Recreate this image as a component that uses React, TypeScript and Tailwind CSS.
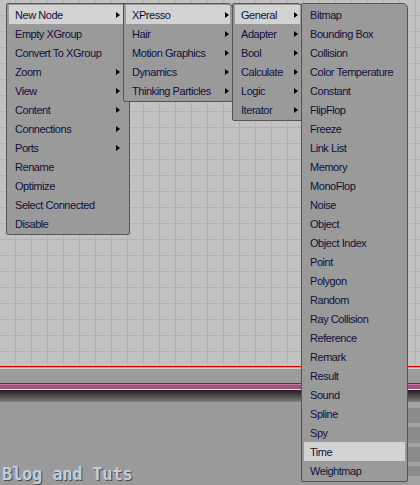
type MenuItem = { label: string; sub?: boolean };

const nodeMenu: MenuItem[] = [
  { label: 'New Node', sub: true },
  { label: 'Empty XGroup' },
  { label: 'Convert To XGroup' },
  { label: 'Zoom', sub: true },
  { label: 'View', sub: true },
  { label: 'Content', sub: true },
  { label: 'Connections', sub: true },
  { label: 'Ports', sub: true },
  { label: 'Rename' },
  { label: 'Optimize' },
  { label: 'Select Connected' },
  { label: 'Disable' },
];

const newNodeMenu: MenuItem[] = [
  { label: 'XPresso', sub: true },
  { label: 'Hair', sub: true },
  { label: 'Motion Graphics', sub: true },
  { label: 'Dynamics', sub: true },
  { label: 'Thinking Particles', sub: true },
];

const xpressoMenu: MenuItem[] = [
  { label: 'General', sub: true },
  { label: 'Adapter', sub: true },
  { label: 'Bool', sub: true },
  { label: 'Calculate', sub: true },
  { label: 'Logic', sub: true },
  { label: 'Iterator', sub: true },
];

const generalMenu: MenuItem[] = [
  'Bitmap', 'Bounding Box', 'Collision', 'Color Temperature', 'Constant', 'FlipFlop',
  'Freeze', 'Link List', 'Memory', 'MonoFlop', 'Noise', 'Object', 'Object Index', 'Point',
  'Polygon', 'Random', 'Ray Collision', 'Reference', 'Remark', 'Result', 'Sound', 'Spline',
  'Spy', 'Time', 'Weightmap',
].map((label) => ({ label }));

// one popup menu. position/width come in as full class names
function PopupMenu({ items, active, className, arrowPad }: {
  items: MenuItem[];
  active: number;
  className: string;
  arrowPad: string;
}) {
  return (
    <div
      className={`absolute top-[3px] border border-[#555] bg-[#9a9a9a] rounded-[2px] rounded-tr-[5px] px-[2px] py-px ${className}`}
    >
      {items.map((item, i) => (
        <div
          key={item.label}
          className={`h-[19px] flex items-center justify-between pl-[6px] pt-px whitespace-nowrap ${arrowPad} ${
            i === active ? 'bg-[#d3d3d3]' : ''
          }`}
        >
          <span>{item.label}</span>
          {/* small black triangle for submenus */}
          {item.sub && (
            <span className="w-0 h-0 border-y-[3.5px] border-y-transparent border-l-[4px] border-l-black" />
          )}
        </div>
      ))}
    </div>
  );
}

export default function App() {
  return (
    <div
      className="relative w-[420px] h-[485px] overflow-hidden bg-[#9a9a9a] text-[11px] tracking-[-0.45px] text-[#10103a]"
      style={{ fontFamily: '"Liberation Sans", Arial, sans-serif' }}
    >
      {/* node canvas with grid */}
      <div className="h-[366px] bg-[#c2c2c2] bg-[linear-gradient(to_right,#b2b2b2_1px,transparent_1px),linear-gradient(to_bottom,#b2b2b2_1px,transparent_1px)] bg-[size:16px_16px] bg-[position:15px_15px]" />

      {/* timeline / divider bands */}
      <div className="h-px bg-[#d40000]" />
      <div className="h-px bg-[#a8a8a8]" />
      <div className="h-px bg-[#cdcdcd]" />
      <div className="h-[14px] bg-[#9b9b9b]" />
      <div className="h-px bg-[#4a3a44]" />
      <div className="h-px bg-[#c07aa0]" />
      <div className="h-[4px] bg-[#a2517f]" />
      <div className="h-px bg-[#f2e6ee]" />
      <div className="h-[11px] bg-[linear-gradient(to_bottom,#1e1e1e,#747474)]" />
      <div className="h-px bg-[#7c7c7c]" />

      {/* attribute panel */}
      <div className="flex h-[83px]">
        <div className="flex-1" />
        <div className="w-[12px] flex flex-col pt-[1px] bg-[#a2a2a2]">
          <div className="h-[5px]" />
          <div className="h-[15px] bg-[#8b8b8b]" />
          <div className="h-[4px]" />
          <div className="h-[16px] bg-[#8b8b8b]" />
          <div className="h-[4px]" />
          <div className="h-[15px] bg-[#8b8b8b]" />
          <div className="h-[4px]" />
          <div className="h-[10px] bg-[#8b8b8b]" />
        </div>
      </div>

      {/* context menus */}
      <PopupMenu items={nodeMenu} active={0} className="left-[6px] w-[124px]" arrowPad="pr-[7px]" />
      <PopupMenu items={newNodeMenu} active={0} className="left-[123px] w-[110px]" arrowPad="pr-[1px]" />
      <PopupMenu items={xpressoMenu} active={0} className="left-[232px] w-[71px]" arrowPad="pr-[2px]" />
      <PopupMenu items={generalMenu} active={23} className="left-[301px] w-[107px]" arrowPad="pr-[2px]" />

      {/* watermark */}
      <div
        className="absolute left-[2px] bottom-[2px] text-[17px] leading-none font-bold tracking-[-0.2px] text-[#c8ccd4]"
        style={{ fontFamily: '"DejaVu Sans Mono", monospace', textShadow: '1px 1px 0 #4c4c4c, -1px 0 0 #8aa0c0' }}
      >
        Blog and Tuts
      </div>
    </div>
  );
}
